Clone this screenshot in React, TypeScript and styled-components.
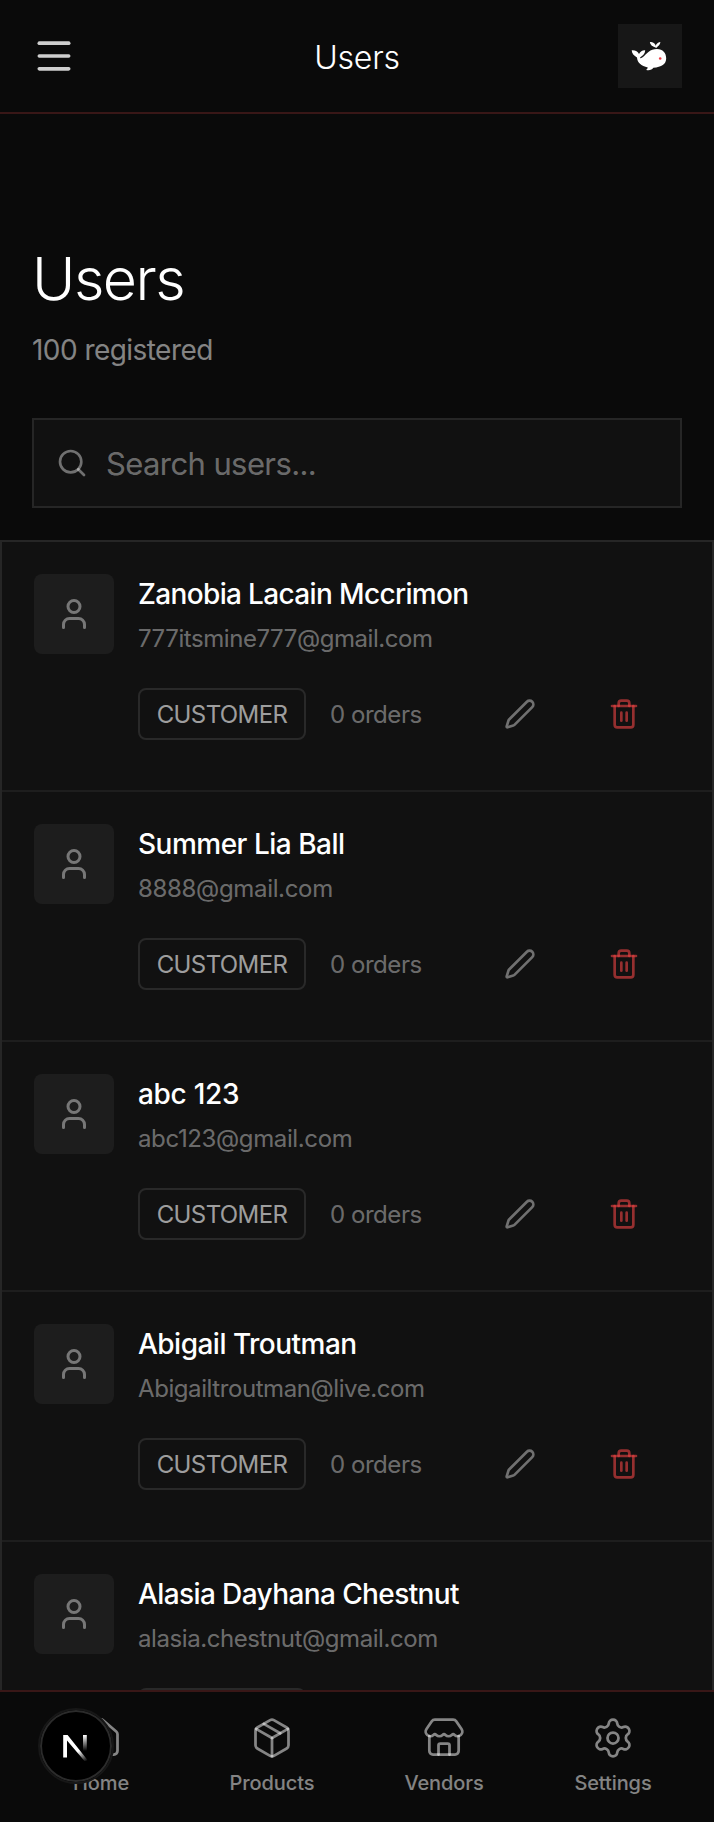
import React from 'react';
import styled, { createGlobalStyle } from 'styled-components';
import { House, Menu, Package, Pen, Search, Settings, Store, Trash2, User } from 'lucide-react';

const GlobalStyle = createGlobalStyle`
  * { box-sizing: border-box; }
  html, body { margin: 0; background: #0a0a0a; }
  body { font-family: Inter, "Liberation Sans", sans-serif; color: #fff; -webkit-font-smoothing: antialiased; }
  button { border: 0; background: none; padding: 0; font: inherit; color: inherit; }
  svg { display: block; flex: none; }
`;

const Screen = styled.div`
  width: 714px;
  height: 1822px;
  display: flex;
  flex-direction: column;
  overflow: hidden;
  background: #0a0a0a;
`;

const Header = styled.header`
  height: 114px;
  flex: none;
  display: grid;
  grid-template-columns: 64px 1fr 64px;
  align-items: center;
  padding: 0 32px;
  border-bottom: 2px solid #391717;
`;

const MenuButton = styled.button`
  color: rgba(255, 255, 255, 0.8);
`;

const HeaderTitle = styled.div`
  padding-top: 3px;
  text-align: center;
  font-size: 32px;
  line-height: 40px;
  font-weight: 300;
  letter-spacing: -0.2px;
`;

const LogoTile = styled.div`
  width: 64px;
  height: 64px;
  background: #171717;
`;

const Intro = styled.section`
  flex: none;
  height: 426px;
  padding: 129px 32px 0;
`;

const Title = styled.h1`
  margin: 0;
  font-size: 59px;
  line-height: 72px;
  font-weight: 350;
  letter-spacing: -1.5px;
`;

const Subtitle = styled.p`
  margin: 15px 0 0;
  font-size: 28px;
  line-height: 40px;
  letter-spacing: -0.55px;
  color: rgba(255, 255, 255, 0.5);
`;

const SearchBox = styled.label`
  margin-top: 48px;
  height: 90px;
  display: flex;
  align-items: center;
  gap: 18px;
  padding: 0 22px;
  background: #111;
  border: 2px solid #262626;
  color: rgba(255, 255, 255, 0.4);
`;

const SearchInput = styled.input`
  flex: 1;
  min-width: 0;
  padding: 2px 0 0;
  border: 0;
  outline: 0;
  background: none;
  color: #fff;
  font: 400 31px/40px Inter, "Liberation Sans", sans-serif;
  letter-spacing: -0.6px;
  &::placeholder { color: rgba(255, 255, 255, 0.4); opacity: 1; }
`;

const UserList = styled.main`
  flex: 1;
  min-height: 0;
  overflow: hidden;
  background: #111;
  border: 2px solid #262626;
  border-bottom: 0;
`;

const UserRow = styled.article`
  height: 250px;
  display: flex;
  gap: 24px;
  padding: 32px 32px 0;
  border-bottom: 2px solid #1e1e1e;
`;

const Avatar = styled.div`
  width: 80px;
  height: 80px;
  flex: none;
  display: grid;
  place-items: center;
  border-radius: 8px;
  background: #1d1d1d;
  color: rgba(255, 255, 255, 0.4);
`;

const UserBody = styled.div`
  flex: 1;
  min-width: 0;
`;

const UserName = styled.div<{ $track: number }>`
  font-size: 28px;
  line-height: 40px;
  font-weight: 500;
  letter-spacing: ${(p) => p.$track}px;
`;

const Email = styled.div<{ $track: number }>`
  margin-top: 9px;
  font-size: 24px;
  line-height: 32px;
  letter-spacing: ${(p) => p.$track}px;
  color: rgba(255, 255, 255, 0.4);
`;

const Details = styled.div`
  margin-top: 33px;
  height: 52px;
  display: flex;
  align-items: center;
`;

const Role = styled.span`
  width: 168px;
  height: 52px;
  padding-top: 1px;
  line-height: 48px;
  text-align: center;
  border: 2px solid #292929;
  border-radius: 8px;
  font-size: 24px;
  letter-spacing: -0.6px;
  color: rgba(255, 255, 255, 0.6);
`;

const Orders = styled.span`
  margin-left: 24px;
  font-size: 24px;
  letter-spacing: -0.45px;
  color: rgba(255, 255, 255, 0.4);
`;

const Actions = styled.div`
  margin-left: auto;
  display: flex;
  gap: 16px;
  margin-right: 12px;
`;

const Action = styled.button<{ $danger?: boolean }>`
  width: 88px;
  height: 52px;
  display: grid;
  place-items: center;
  color: ${(p) => (p.$danger ? 'rgba(239, 68, 68, 0.6)' : 'rgba(255, 255, 255, 0.4)')};
`;

const BottomNav = styled.nav`
  position: relative;
  flex: none;
  height: 132px;
  display: grid;
  grid-template-columns: 172px 170px 174px 164px;
  padding: 24px 0 0 15px;
  border-top: 2px solid #391717;
  background: #0a0a0a;
`;

const NavItem = styled.a`
  display: flex;
  flex-direction: column;
  align-items: center;
  gap: 11px;
  font-size: 20px;
  line-height: 24px;
  font-weight: 450;
  letter-spacing: -0.1px;
  color: rgba(255, 255, 255, 0.5);
`;

const DevBadge = styled.div`
  position: absolute;
  left: 38px;
  top: 16px;
  width: 76px;
  height: 76px;
  border-radius: 50%;
  display: grid;
  place-items: center;
  background: #000;
  border: 2px solid #171717;
  box-shadow: inset 0 0 0 2px #2b2b2b;
`;

const Whale = () => (
  <svg width="64" height="64" viewBox="0 0 64 64" fill="#fff">
    <path d="M13.7 26.3C17.2 26 20 27.5 21 30C22.2 27.4 25 25.9 27.2 26.3C27 29.5 25.4 31.4 22.3 33.2C21.6 34.6 23.5 34.4 25 33.1C29 29.5 31.8 25 39 25C44.8 25 48.2 29 48.2 34.3C48.2 40.2 43.5 43.2 35.4 43.8C34.2 45.8 31 47 28.4 46C28.2 45.3 29.5 45.2 29.8 43.5C23.2 42.2 19.2 38.4 19 33.6C16 31.8 13.8 29.5 13.7 26.3Z" />
    <path d="M37.6 23.7C37.3 21.5 38.7 18.4 42.4 18C42.2 20.9 40.4 21.6 38.6 23.7Z" />
    <path d="M37.5 23.4C34.1 22.4 31.9 20.7 31.9 18C35.4 17.3 37.5 19.8 38.1 22.9Z" />
    <circle cx="42.2" cy="34.5" r="1.3" fill="#ef3b43" />
  </svg>
);

const NextMark = () => (
  <svg width="28" height="30" viewBox="0 0 28 30" fill="none">
    <defs>
      <linearGradient id="diagonal" x1="17" y1="19.5" x2="25" y2="30" gradientUnits="userSpaceOnUse">
        <stop stopColor="#fff" />
        <stop offset="1" stopColor="#fff" stopOpacity="0" />
      </linearGradient>
      <linearGradient id="stem" x1="0" y1="4" x2="0" y2="20" gradientUnits="userSpaceOnUse">
        <stop stopColor="#fff" />
        <stop offset="1" stopColor="#fff" stopOpacity="0" />
      </linearGradient>
    </defs>
    <path d="M1.2 4H5.6L25.7 29.2L23.2 30.8L5 9.5V26.5H1.2Z" fill="url(#diagonal)" />
    <path d="M21 4H24.8V20H21Z" fill="url(#stem)" />
  </svg>
);

const users = [
  { name: 'Zanobia Lacain Mccrimon', email: '777itsmine777@gmail.com', nameTrack: -0.65, emailTrack: -0.43 },
  { name: 'Summer Lia Ball', email: '8888@gmail.com', nameTrack: -0.5, emailTrack: -0.33 },
  { name: 'abc 123', email: 'abc123@gmail.com', nameTrack: -0.3, emailTrack: -0.38 },
  { name: 'Abigail Troutman', email: 'Abigailtroutman@live.com', nameTrack: -0.52, emailTrack: -0.42 },
  { name: 'Alasia Dayhana Chestnut', email: 'alasia.chestnut@gmail.com', nameTrack: -0.6, emailTrack: -0.42 },
];

const tabs = [
  { label: 'Home', Icon: House },
  { label: 'Products', Icon: Package },
  { label: 'Vendors', Icon: Store },
  { label: 'Settings', Icon: Settings },
];

export default function App() {
  return (
    <Screen>
      <GlobalStyle />
      <Header>
        <MenuButton aria-label="Open menu"><Menu size={44} /></MenuButton>
        <HeaderTitle>Users</HeaderTitle>
        <LogoTile><Whale /></LogoTile>
      </Header>
      <Intro>
        <Title>Users</Title>
        <Subtitle>100 registered</Subtitle>
        <SearchBox>
          <Search size={32} />
          <SearchInput placeholder="Search users..." />
        </SearchBox>
      </Intro>
      <UserList>
        {users.map((user) => (
          <UserRow key={user.email}>
            <Avatar><User size={36} /></Avatar>
            <UserBody>
              <UserName $track={user.nameTrack}>{user.name}</UserName>
              <Email $track={user.emailTrack}>{user.email}</Email>
              <Details>
                <Role>CUSTOMER</Role>
                <Orders>0 orders</Orders>
                <Actions>
                  <Action aria-label="Edit user"><Pen size={32} /></Action>
                  <Action $danger aria-label="Delete user"><Trash2 size={32} /></Action>
                </Actions>
              </Details>
            </UserBody>
          </UserRow>
        ))}
      </UserList>
      <BottomNav>
        {tabs.map(({ label, Icon }) => (
          <NavItem key={label}>
            <Icon size={44} strokeWidth={1.5} />
            {label}
          </NavItem>
        ))}
        <DevBadge><NextMark /></DevBadge>
      </BottomNav>
    </Screen>
  );
}
